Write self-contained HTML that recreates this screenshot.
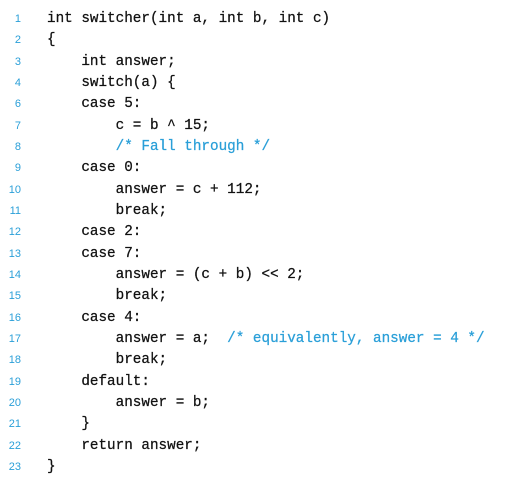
<!DOCTYPE html>
<html><head><style>
body{margin:0;width:509px;height:478px;background:#fff;overflow:hidden;position:relative}
.l{position:absolute;left:0;height:20px;width:509px}
.n{position:absolute;right:488px;top:4px;font:11px "Liberation Sans",sans-serif;color:#2a9fd8}
.c{position:absolute;left:47px;top:0;font:14.3px/20px "Liberation Mono",monospace;color:#111;white-space:pre;-webkit-text-stroke:0.25px #111}
.k{color:#2a9fd8;-webkit-text-stroke:0.25px #2a9fd8}
</style></head><body>
<div class="l" style="top:9px"><span class="n">1</span><span class="c">int switcher(int a, int b, int c)</span></div>
<div class="l" style="top:30.3px"><span class="n">2</span><span class="c">{</span></div>
<div class="l" style="top:51.7px"><span class="n">3</span><span class="c">    int answer;</span></div>
<div class="l" style="top:73px"><span class="n">4</span><span class="c">    switch(a) {</span></div>
<div class="l" style="top:94.3px"><span class="n">6</span><span class="c">    case 5:</span></div>
<div class="l" style="top:115.7px"><span class="n">7</span><span class="c">        c = b ^ 15;</span></div>
<div class="l" style="top:137px"><span class="n">8</span><span class="c">        <span class="k">/* Fall through */</span></span></div>
<div class="l" style="top:158.3px"><span class="n">9</span><span class="c">    case 0:</span></div>
<div class="l" style="top:179.6px"><span class="n">10</span><span class="c">        answer = c + 112;</span></div>
<div class="l" style="top:201px"><span class="n">11</span><span class="c">        break;</span></div>
<div class="l" style="top:222.3px"><span class="n">12</span><span class="c">    case 2:</span></div>
<div class="l" style="top:243.6px"><span class="n">13</span><span class="c">    case 7:</span></div>
<div class="l" style="top:265px"><span class="n">14</span><span class="c">        answer = (c + b) &lt;&lt; 2;</span></div>
<div class="l" style="top:286.3px"><span class="n">15</span><span class="c">        break;</span></div>
<div class="l" style="top:307.6px"><span class="n">16</span><span class="c">    case 4:</span></div>
<div class="l" style="top:329px"><span class="n">17</span><span class="c">        answer = a;  <span class="k">/* equivalently, answer = 4 */</span></span></div>
<div class="l" style="top:350.3px"><span class="n">18</span><span class="c">        break;</span></div>
<div class="l" style="top:371.6px"><span class="n">19</span><span class="c">    default:</span></div>
<div class="l" style="top:393px"><span class="n">20</span><span class="c">        answer = b;</span></div>
<div class="l" style="top:414.3px"><span class="n">21</span><span class="c">    }</span></div>
<div class="l" style="top:435.6px"><span class="n">22</span><span class="c">    return answer;</span></div>
<div class="l" style="top:457px"><span class="n">23</span><span class="c">}</span></div>
</body></html>
